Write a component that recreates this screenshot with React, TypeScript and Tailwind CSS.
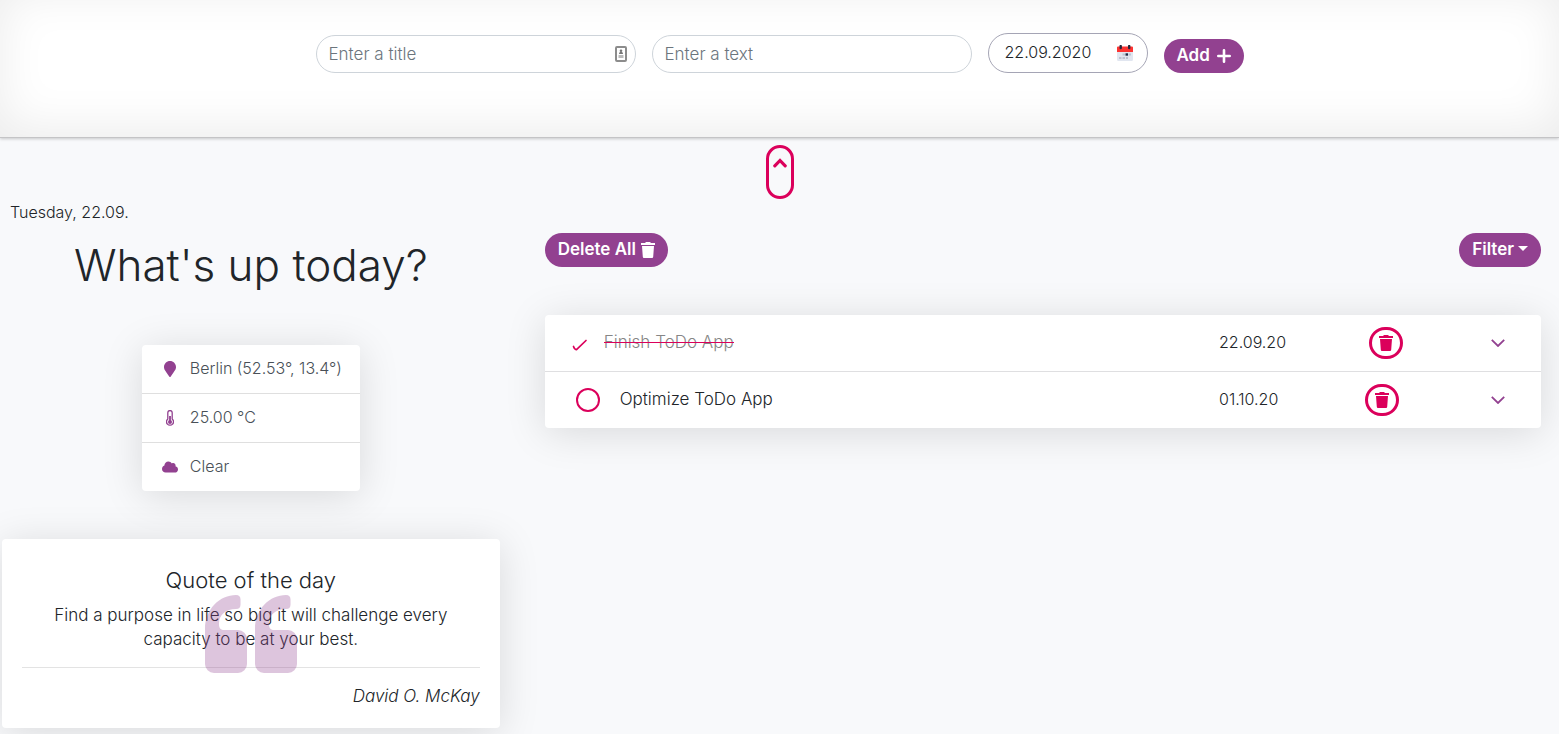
import { useState } from 'react';
import type { ReactNode } from 'react';
import { FaCloud, FaMapMarker } from 'react-icons/fa';

type Todo = { id: number; title: string; date: string; done: boolean };

const initialTodos: Todo[] = [
  { id: 1, title: 'Finish ToDo App', date: '22.09.20', done: true },
  { id: 2, title: 'Optimize ToDo App', date: '01.10.20', done: false },
];

const shadow = 'shadow-[0_5px_40px_rgba(0,0,0,0.13)]';
const pill =
  'flex h-[34px] items-center rounded-full bg-[#924190] px-[13px] text-[17px] leading-6 font-semibold text-white';
const field =
  'h-[38px] w-full rounded-full border border-[#ced4da] bg-white px-3 text-[17px] text-[#212529] outline-none placeholder:text-[#6c757d]';

function TrashIcon() {
  return (
    <svg viewBox="0 0 14 16" className="h-4 w-[14px]" fill="currentColor" aria-hidden="true">
      <path d="M0 1h4l1-1h4l1 1h4v2H0zM1 4h12l-.8 10.7c-.1.8-.6 1.3-1.400 1.300H3.200c-.8 0-1.300-.5-1.400-1.300z" />
    </svg>
  );
}

function PlusIcon() {
  return (
    <svg viewBox="0 0 14 14" className="h-[14px] w-[14px]" stroke="currentColor" strokeWidth="2.6" strokeLinecap="round" aria-hidden="true">
      <path d="M7 1.300v11.400M1.300 7h11.400" />
    </svg>
  );
}

function QuoteIcon({ className }: { className: string }) {
  const mark =
    'M0 69V34C0 14 15 0 31 0c3 0 4.500 1.500 4.500 4.500v5c0 3-1.500 4.500-4.500 4.500C21 14 14 20 14 28v2c0 3 2 5 5 5h14a9 9 0 0 1 9 9v25a9 9 0 0 1-9 9H9a9 9 0 0 1-9-9z';
  return (
    <svg viewBox="0 0 92 78" className={className} fill="currentColor" aria-hidden="true">
      <path d={mark} />
      <path d={mark} transform="translate(50 0)" />
    </svg>
  );
}

function ThermometerIcon() {
  return (
    <svg viewBox="0 0 8 16" className="h-4 w-2" fill="none" stroke="currentColor" aria-hidden="true">
      <path d="M1.800 9V2.700a2.200 2.200 0 0 1 4.400 0V9a3.500 3.500 0 1 1-4.400 0z" strokeWidth="1.3" />
      <path d="M4 6v6" strokeWidth="1.8" />
      <circle cx="4" cy="12" r="2" fill="currentColor" stroke="none" />
    </svg>
  );
}

function ContactIcon() {
  return (
    <svg viewBox="0 0 12 16" className="h-4 w-3" aria-hidden="true">
      <rect x="1" y="1" width="10" height="14" rx="1" fill="#fff" stroke="#8c8c8c" strokeWidth="2" />
      <circle cx="6" cy="4.700" r="1.300" fill="#777" />
      <path d="M4 8c0-3 4-3 4 0z" fill="#777" />
      <path d="M3.500 9h5v3h-5z" fill="#bbb" />
    </svg>
  );
}

function CalendarIcon() {
  return (
    <svg viewBox="0 0 16 16" className="h-4 w-4" aria-hidden="true">
      <path d="M0 6h16v8.500a1.500 1.500 0 0 1-1.500 1.500h-13A1.500 1.500 0 0 1 0 14.500z" fill="#e1e6f0" />
      <path d="M0 7V2.500A1 1 0 0 1 1 1.500h14a1 1 0 0 1 1 1V7z" fill="#fd3331" />
      <path d="M2.500 1a1.200 1.200 0 0 1 2.400 0v2a1.200 1.200 0 0 1-2.400 0zM11 1a1.200 1.200 0 0 1 2.400 0v2A1.200 1.200 0 0 1 11 3z" fill="#26263a" />
      <path d="M5.500 8.500h2.500v2H5.500zM11.500 8.500H14v2h-2.500zM2 12h2.500v2H2zM5.500 12h2.500v2H5.500zM9 12h2v2H9z" fill="#bcc2d0" />
      <path d="M8.500 8.300h2.500v2.400H8.500z" fill="#1f2c47" />
    </svg>
  );
}

function WeatherRow({ icon, children }: { icon: ReactNode; children: ReactNode }) {
  return (
    <li className="flex h-12 box-content items-center gap-3 px-5">
      <span className="flex w-4 shrink-0 justify-center text-[#924190]">{icon}</span>
      <span className="pb-[2px] whitespace-nowrap text-[#495057]">{children}</span>
    </li>
  );
}

function TodoRow({ todo, onToggle, onDelete }: { todo: Todo; onToggle: () => void; onDelete: () => void }) {
  const id = `todo-${todo.id}`;
  return (
    <li className="flex h-14 box-content items-center justify-between pr-[30px] pl-[27px]">
      <div className="flex items-center">
        <span className={todo.done ? 'mr-4 grid h-6 w-4 place-items-center' : 'mr-5 ml-1 grid place-items-center'}>
          <input
            id={id}
            type="checkbox"
            checked={todo.done}
            onChange={onToggle}
            className={
              todo.done
                ? 'col-start-1 row-start-1 h-6 w-4 appearance-none'
                : 'h-6 w-6 appearance-none rounded-full border-2 border-[#db005b]'
            }
          />
          {todo.done && (
            <svg viewBox="0 0 16 12" className="pointer-events-none col-start-1 row-start-1 mt-1 h-3 w-4" fill="none" stroke="#db005b" strokeWidth="1.700" strokeLinecap="round" strokeLinejoin="round" aria-hidden="true">
              <path d="M1.500 7.500c.8 2.200 1.600 3.200 3 3.200L14 1.500" />
            </svg>
          )}
        </span>
        <label
          htmlFor={id}
          className={
            todo.done
              ? "relative pb-[2px] text-[#868686] after:absolute after:inset-x-0 after:top-3 after:h-px after:bg-[#db005b] after:content-['']"
              : 'pb-[2px]'
          }
        >
          {todo.title}
        </label>
      </div>
      <div className="flex w-[292px] items-center justify-between">
        <time className="pb-[2px] text-base">{todo.date}</time>
        <button
          type="button"
          aria-label="Delete"
          onClick={onDelete}
          className="grid h-8 w-[34px] place-items-center rounded-full border-3 border-[#db005b] text-[#db005b]"
        >
          <TrashIcon />
        </button>
        <button type="button" aria-label="Details" className="grid h-6 w-[26px] place-items-center text-[#924190]">
          <svg viewBox="0 0 14 8" className="h-2 w-[14px]" fill="none" stroke="currentColor" strokeWidth="1.800" aria-hidden="true">
            <path d="M.8.800 7 7 13.200.8" />
          </svg>
        </button>
      </div>
    </li>
  );
}

export default function App() {
  const [todos, setTodos] = useState(initialTodos);
  return (
    <div className="min-h-screen bg-[#f8f9fb] font-['Inter','Open_Sans',sans-serif] text-[17px] leading-6 font-light text-[#212529]">
      <header className="border-b border-[#c4c4c6] bg-white px-4 pt-[33px] pb-16 shadow-[inset_0_-8px_48px_rgba(0,0,0,0.08),0_1px_3px_rgba(0,0,0,0.2)]">
        <form className="flex items-end justify-center gap-4" onSubmit={(e) => e.preventDefault()}>
          <div className="relative w-80">
            <input type="text" aria-label="Title" placeholder="Enter a title" className={field} />
            <span className="absolute top-[11px] right-[9px]">
              <ContactIcon />
            </span>
          </div>
          <div className="w-80">
            <input type="text" aria-label="Text" placeholder="Enter a text" className={field} />
          </div>
          <div className="relative w-40">
            <input
              type="text"
              aria-label="Date"
              defaultValue="22.09.2020"
              className="block h-10 w-full rounded-full border border-[#a5a5b5] bg-white pr-10 pb-[2px] pl-4 text-base outline-none"
            />
            <button type="button" aria-label="Pick a date" className="absolute top-3 right-[15px]">
              <CalendarIcon />
            </button>
          </div>
          <button type="submit" className={`${pill} w-20 justify-between`}>
            <span className="pb-[2px]">Add</span>
            <PlusIcon />
          </button>
        </form>
      </header>

      <div className="flex justify-center pt-[7px]">
        <button
          type="button"
          aria-label="Collapse"
          className="flex h-[54px] w-7 justify-center rounded-full border-3 border-[#db005b] pt-[10px] text-[#db005b]"
        >
          <svg viewBox="0 0 14 10" className="h-[10px] w-[14px]" fill="none" stroke="currentColor" strokeWidth="3.200" strokeLinecap="round" aria-hidden="true">
            <path d="M1.800 7.800 7 2.500l5.200 5.300" />
          </svg>
        </button>
      </div>

      <main className="grid grid-cols-[1fr_2fr]">
        <section className="pt-px pr-5 pb-1 pl-[2px]">
          <p className="pl-2 text-base leading-6">Tuesday, 22.09.</p>
          <h1 className="mt-4 text-center text-[44px] leading-[50px]">What's up today?</h1>

          <ul className={`mx-auto mt-[55px] w-[218px] divide-y divide-[#dfdfdf] rounded bg-white text-base ${shadow}`}>
            <WeatherRow icon={<FaMapMarker className="h-4 w-3" />}>Berlin (52.53°, 13.4°)</WeatherRow>
            <WeatherRow icon={<ThermometerIcon />}>25.00 °C</WeatherRow>
            <WeatherRow icon={<FaCloud className="h-4 w-4" />}>Clear</WeatherRow>
          </ul>

          <figure className={`relative mt-12 rounded bg-white px-5 pt-[29px] pb-5 ${shadow}`}>
            <h2 className="text-center text-[22px] leading-6">Quote of the day</h2>
            <blockquote className="px-5 pt-[11px] text-center">
              Find a purpose in life so big it will challenge every capacity to be at your best.
            </blockquote>
            <hr className="mt-4 border-[#e3e3e3]" />
            <figcaption className="pt-4 text-right italic">David O. McKay</figcaption>
            <QuoteIcon className="pointer-events-none absolute top-14 left-1/2 h-[78px] w-[92px] -translate-x-1/2 text-[#924190] opacity-30" />
          </figure>
        </section>

        <section className="pt-[34px] pr-[18px] pl-[25px]">
          <div className="flex justify-between">
            <button type="button" className={`${pill} gap-[5px]`} onClick={() => setTodos([])}>
              <span className="pb-[2px]">Delete All</span>
              <TrashIcon />
            </button>
            <button type="button" className={`${pill} gap-1`}>
              <span className="pb-[2px]">Filter</span>
              <svg viewBox="0 0 10 5" className="mb-1 h-[5px] w-[10px]" fill="currentColor" aria-hidden="true">
                <path d="M0 0h10L5 5z" />
              </svg>
            </button>
          </div>
          <ul className={`mt-12 divide-y divide-[#dfdfe1] rounded bg-white ${shadow}`}>
            {todos.map((todo) => (
              <TodoRow
                key={todo.id}
                todo={todo}
                onToggle={() => setTodos(todos.map((t) => (t.id === todo.id ? { ...t, done: !t.done } : t)))}
                onDelete={() => setTodos(todos.filter((t) => t.id !== todo.id))}
              />
            ))}
          </ul>
        </section>
      </main>
    </div>
  );
}
